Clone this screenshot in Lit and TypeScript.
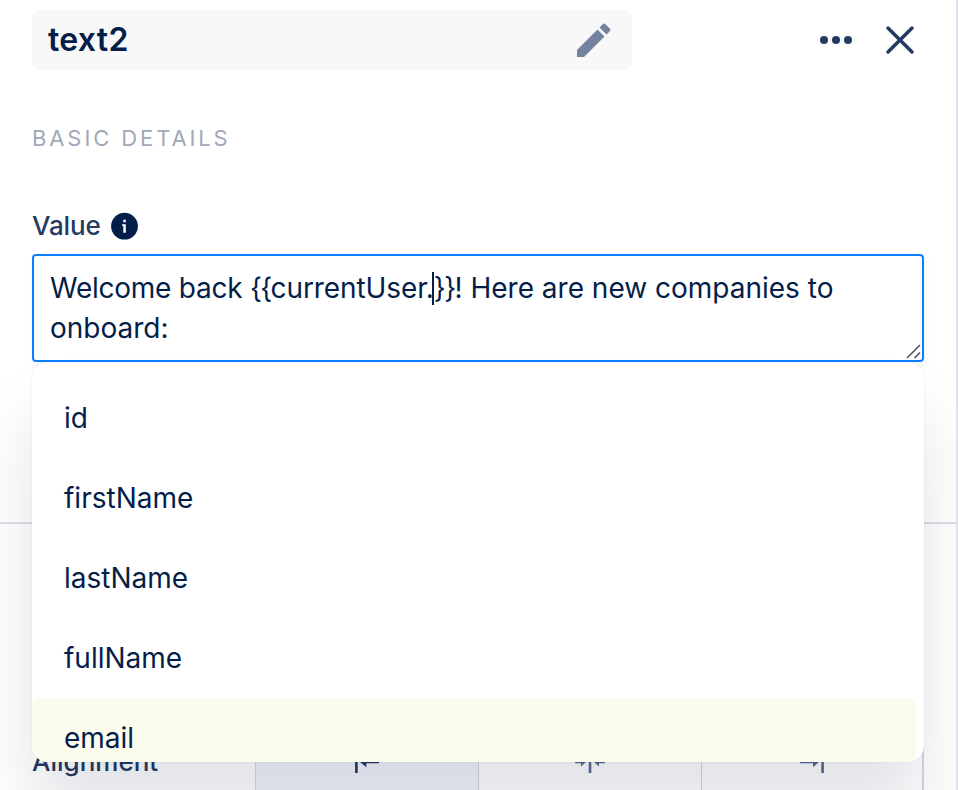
import { LitElement, html, css, svg } from "lit";
import { customElement, property } from "lit/decorators.js";

const alignIcons = {
  left: {
    width: 24,
    shape: svg`<path d="M1.4 -11V11M24 0H8"/><path class="head" d="M5 0L11.4 -5.2V5.2Z"/>`,
  },
  center: {
    width: 30,
    shape: svg`<path d="M15 -11V11M0 0H8M30 0H22"/><path class="head" d="M11 0L6 -4.6V4.6ZM19 0L24 -4.6V4.6Z"/>`,
  },
  right: {
    width: 24,
    shape: svg`<path d="M22.6 -11V11M0 0H16"/><path class="head" d="M19 0L13 -5.2V5.2Z"/>`,
  },
};

@customElement("suggestion-menu")
class SuggestionMenu extends LitElement {
  @property({ type: Array }) items: string[] = [];
  @property() active = "";

  static styles = css`
    :host {
      display: block;
      box-sizing: border-box;
      height: 400px;
      padding: 16px 8px 0 0;
      overflow: hidden;
      background: #fff;
      border-radius: 16px;
      box-shadow: 0 0 2px rgba(9, 30, 66, 0.1), 0 54px 68px rgba(9, 20, 56, 0.115);
    }
    .item {
      height: 80px;
      box-sizing: border-box;
      padding-left: 32px;
      line-height: 80px;
      border-radius: 8px;
    }
    .active {
      background: #fbfbee;
    }
  `;

  render() {
    return this.items.map(
      (i) => html`<div class="item ${i === this.active ? "active" : ""}">${i}</div>`,
    );
  }
}

@customElement("app-root")
class AppRoot extends LitElement {
  static styles = css`
    :host {
      display: block;
      height: 790px;
      box-sizing: border-box;
      overflow: hidden;
      background: #fff;
      border-right: 2px solid #e2e3ea;
      color: #041e49;
      font: 400 28px/40px Inter, sans-serif;
    }
    svg {
      display: block;
      overflow: visible;
      fill: none;
    }
    .details {
      box-sizing: border-box;
      height: 524px;
      padding: 10px 32px 0;
      border-bottom: 2px solid #dcdfe7;
    }
    .header {
      display: flex;
      align-items: center;
      height: 60px;
    }
    .name {
      display: flex;
      align-items: center;
      justify-content: space-between;
      box-sizing: border-box;
      width: 600px;
      height: 60px;
      padding: 0 21px 0 16px;
      background: #f8f8f8;
      border-radius: 8px;
      font-size: 32px;
      font-weight: 600;
      letter-spacing: 0.3px;
    }
    .more {
      margin-left: 188px;
    }
    .close {
      margin-left: 34px;
    }
    .heading {
      margin-top: 53px;
      height: 30px;
      line-height: 30px;
      font-size: 22px;
      letter-spacing: 2.9px;
      color: #9fa9ba;
    }
    .label {
      display: flex;
      align-items: center;
      height: 40px;
      margin-top: 53px;
      font-size: 26px;
      font-weight: 500;
      color: #253a61;
    }
    .label span {
      width: 79px;
      letter-spacing: -0.1px;
    }
    .field {
      position: relative;
      width: 892px;
      height: 108px;
      margin: 8px 0 0;
      box-sizing: border-box;
      padding: 12px 16px;
      border: 2px solid #0b7fff;
      border-radius: 4px;
      box-shadow: 2px 3px 6px rgba(9, 30, 66, 0.05);
    }
    .greeting {
      letter-spacing: -0.25px;
    }
    .brace {
      letter-spacing: -1.6px;
    }
    .path {
      letter-spacing: -0.1px;
    }
    .caret {
      display: inline-block;
      width: 2px;
      height: 33px;
      margin: -8px 0 0 -2px;
      vertical-align: -7px;
      background: #041e49;
    }
    .grip {
      position: absolute;
      right: 1px;
      bottom: 1px;
    }
    .menu {
      position: absolute;
      z-index: 1;
      top: 106px;
      left: -2px;
      width: 892px;
    }
    .alignment {
      display: grid;
      grid-template-columns: 223px 669px;
      align-items: center;
      height: 64px;
      margin: 206px 32px 0;
      font-size: 26px;
      font-weight: 500;
      color: #253a61;
    }
    .options {
      display: grid;
      grid-template-columns: 223px 223px 1fr;
      height: 64px;
      box-sizing: border-box;
      border: 2px solid #d3d8e2;
      border-width: 2px 2px 2px 1px;
    }
    .option {
      display: grid;
      place-items: center;
      padding-right: 1px;
      border-right: 1px solid #cfd5e0;
      color: #566a8e;
    }
    .option:last-child {
      padding-right: 0;
      border-right: 0;
    }
    .option svg {
      stroke: currentColor;
      stroke-width: 2.6;
    }
    .option .head {
      fill: currentColor;
      stroke: none;
    }
    .selected {
      background: #f2f4f9;
      color: #253a61;
    }
  `;

  private option(kind: keyof typeof alignIcons, selected = false) {
    const { width, shape } = alignIcons[kind];
    return html`<div class="option ${selected ? "selected" : ""}">
      <svg width=${width} height="22" viewBox="0 -11 ${width} 22">${shape}</svg>
    </div>`;
  }

  render() {
    return html`
      <div class="details">
        <div class="header">
          <div class="name">
            <span>text2</span>
            <svg width="34" height="34" viewBox="0 0 34 34">
              <path
                fill="#73829d"
                d="M0 27L20.5 6.5L27.5 13.5L7 34H0ZM22.5 4.5L26 1Q27 0 28.2 1L33 5.8Q34 7 33 8L29.5 11.5Z"
              />
            </svg>
          </div>
          <svg class="more" width="32" height="8" viewBox="0 0 32 8">
            <g fill="#253a61">
              <circle cx="4" cy="4" r="4" />
              <circle cx="16" cy="4" r="4" />
              <circle cx="28" cy="4" r="4" />
            </g>
          </svg>
          <svg class="close" width="28" height="28" viewBox="0 0 28 28">
            <path
              d="M2 2L26 26M26 2L2 26"
              stroke="#253a61"
              stroke-width="3.5"
              stroke-linecap="round"
            />
          </svg>
        </div>
        <div class="heading">BASIC DETAILS</div>
        <div class="label">
          <span>Value</span>
          <svg width="27" height="27" viewBox="0 0 27 27">
            <circle cx="13.5" cy="13.2" r="13.4" fill="#041e49" />
            <path d="M11.2 11.3H14.8V19.8H12.3V13H11.2ZM12.3 6.8H14.8V9.3H12.3Z" fill="#fff" />
          </svg>
        </div>
        <div class="field">
          <span class="greeting">Welcome back </span><span class="brace">{{</span
          ><span class="path">currentUser.</span><span class="caret"></span
          ><span class="brace">}}</span>! Here are new companies to onboard:
          <svg class="grip" width="15" height="15" viewBox="0 0 15 15">
            <path d="M1 14L14 1M8.5 14L14 8.5" stroke="#4d5566" stroke-width="1.6" />
          </svg>
          <suggestion-menu
            class="menu"
            .items=${["id", "firstName", "lastName", "fullName", "email"]}
            active="email"
          ></suggestion-menu>
        </div>
      </div>
      <div class="alignment">
        <span>Alignment</span>
        <div class="options">
          ${this.option("left", true)} ${this.option("center")} ${this.option("right")}
        </div>
      </div>
    `;
  }
}
